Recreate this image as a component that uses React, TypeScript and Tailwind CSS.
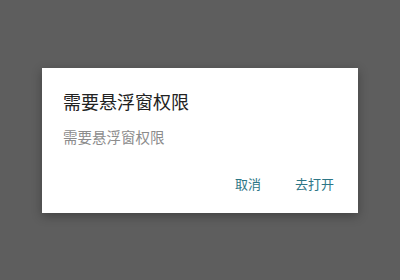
import React from 'react';

// Permission dialog over a dimmed screen
export default function App() {
  return (
    <div
      className="flex h-[280px] w-[400px] items-center justify-center bg-[#5e5e5e]"
      style={{ fontFamily: '"Noto Sans CJK SC", "Noto Sans", sans-serif' }}
    >
      <div className="flex h-[145px] w-[316px] flex-col bg-white shadow-[0_3px_10px_rgba(0,0,0,0.3)]">
        <div className="pl-[21px] pt-[21px] text-[18px] leading-[24px] text-[#222222]">需要悬浮窗权限</div>
        <div className="mt-[14px] pl-[21px] text-[14.5px] leading-[20px] text-[#8c8c8c]">需要悬浮窗权限</div>
        <div className="mt-auto flex justify-end gap-[34px] pb-[20px] pr-[24px] text-[13px] leading-[18px] text-[#2d7686]">
          <span>取消</span>
          <span>去打开</span>
        </div>
      </div>
    </div>
  );
}
